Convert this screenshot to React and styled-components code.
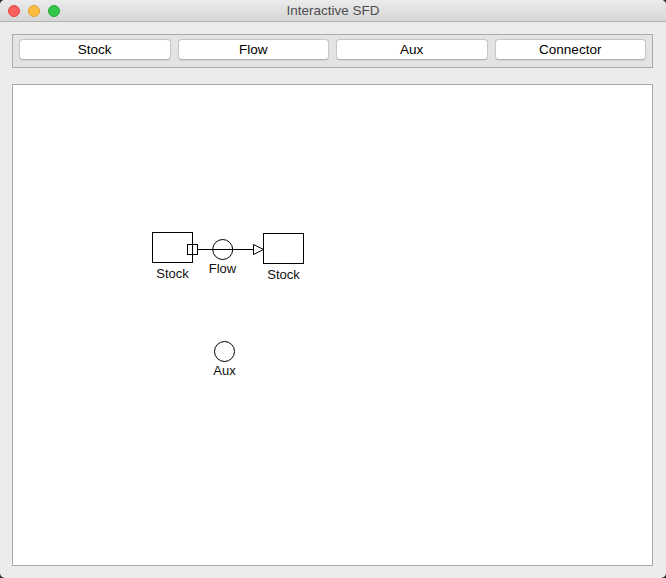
import React from 'react';
import styled, { createGlobalStyle } from 'styled-components';

const GlobalStyle = createGlobalStyle`
  html, body {
    margin: 0;
    padding: 0;
    background: #2a2a2a;
  }
  body {
    font-family: "Liberation Sans", Arial, sans-serif;
  }
`;

const Window = styled.div`
  width: 666px;
  height: 578px;
  background: #ececec;
  border-radius: 5px;
  overflow: hidden;
  display: flex;
  flex-direction: column;
`;

const TitleBar = styled.div`
  position: relative;
  height: 21px;
  flex: none;
  display: flex;
  align-items: center;
  justify-content: center;
  background: linear-gradient(#ebebeb, #d6d6d6);
  border-bottom: 1px solid #b4b4b4;
  font-size: 13.5px;
  color: #4d4d4d;
`;

const Lights = styled.div`
  position: absolute;
  left: 8px;
  top: 5px;
  display: flex;
  gap: 8px;
`;

const Light = styled.span`
  width: 12px;
  height: 12px;
  border-radius: 50%;
  box-sizing: border-box;
  background: ${({ $color }) => $color};
  border: 0.5px solid ${({ $edge }) => $edge};
`;

const Body = styled.div`
  flex: 1;
  display: flex;
  flex-direction: column;
  gap: 16px;
  padding: 12px 13px 12px 12px;
  min-height: 0;
`;

const Toolbar = styled.div`
  display: grid;
  grid-template-columns: repeat(4, 1fr);
  gap: 7px;
  padding: 4px 6px 7px;
  border: 1px solid #ababab;
  background: #e4e4e4;
`;

const ToolButton = styled.button`
  height: 21px;
  padding: 0;
  margin: 0;
  background: #fff;
  border: 1px solid #c6c6c6;
  border-bottom-color: #b3b3b3;
  border-radius: 4px;
  box-shadow: 0 0.5px 1px rgba(0, 0, 0, 0.08);
  font-family: "Liberation Sans", Arial, sans-serif;
  font-size: 13.5px;
  color: #000;
`;

const Canvas = styled.div`
  flex: 1;
  background: #fff;
  border: 1px solid #a9a9a9;
  position: relative;
`;

const Diagram = styled.svg`
  position: absolute;
  left: 0;
  top: 0;
  width: 100%;
  height: 100%;
  font-family: "Liberation Sans", Arial, sans-serif;
  font-size: 13px;
`;

const Label = ({ x, y, children }) => (
  <text x={x} y={y} textAnchor="middle" fill="#111">{children}</text>
);

export default function App() {
  return (
    <>
      <GlobalStyle />
      <Window>
        <TitleBar>
          <Lights>
            <Light $color="#fc605c" $edge="#de4a46" />
            <Light $color="#fdbc40" $edge="#dea236" />
            <Light $color="#34c84a" $edge="#27aa35" />
          </Lights>
          Interactive SFD
        </TitleBar>
        <Body>
          <Toolbar>
            <ToolButton>Stock</ToolButton>
            <ToolButton>Flow</ToolButton>
            <ToolButton>Aux</ToolButton>
            <ToolButton>Connector</ToolButton>
          </Toolbar>
          <Canvas>
            <Diagram>
              <g fill="none" stroke="#000" strokeWidth="1">
                <rect x="139.5" y="147.5" width="40" height="30" />
                <line x1="184.5" y1="164.5" x2="240" y2="164.5" />
                <rect x="174.5" y="159.5" width="10" height="10" />
                <circle cx="209.7" cy="164.5" r="10" />
                <polygon points="240.5,159.5 250.5,164.5 240.5,169.5" fill="#fff" />
                <rect x="250.5" y="148.5" width="40" height="30" />
                <circle cx="211.5" cy="266.5" r="10" />
              </g>
              <Label x="159.5" y="193">Stock</Label>
              <Label x="209.5" y="188">Flow</Label>
              <Label x="270.5" y="194">Stock</Label>
              <Label x="211.5" y="290">Aux</Label>
            </Diagram>
          </Canvas>
        </Body>
      </Window>
    </>
  );
}
